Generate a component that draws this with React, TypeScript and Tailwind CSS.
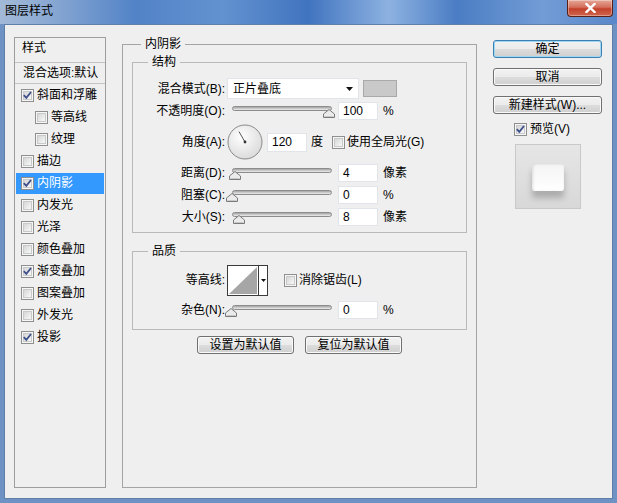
import React from "react";

function Check({ on }: { on?: boolean }) {
  return (
    <span className="flex h-[13px] w-[13px] shrink-0 items-center justify-center border border-[#8e8f8f] bg-[#f6f6f6]">
      <span className="flex h-[9px] w-[9px] items-center justify-center border border-[#c8c9ca] bg-[linear-gradient(135deg,#d6d6d6,#f8f8f8)]">
        {on && (
          <svg width="9" height="9" viewBox="0 0 9 9" className="overflow-visible">
            <path d="M0.8 4.2 L3.3 6.9 L8 1" fill="none" stroke="#3d4f8a" strokeWidth="1.8" />
          </svg>
        )}
      </span>
    </span>
  );
}

function Slider({ at }: { at: number }) {
  return (
    <div className="relative h-[12px] w-[100px] shrink-0">
      <div className="mt-[2px] h-[5px] rounded-[3px] border border-[#8c8c8c] bg-[linear-gradient(#a4a4a4,#ededed)]" />
      <svg width="12" height="9" viewBox="0 0 12 9" className="absolute top-[3px]" style={{ left: at }}>
        <path d="M0.5 8.5 V5 L6 0.5 L11.5 5 V8.5 Z" fill="#ebebeb" stroke="#7a7a7a" />
        <path d="M1.5 7.5 H10.5" stroke="#c8c8c8" />
      </svg>
    </div>
  );
}

function Field({ v }: { v: string }) {
  return (
    <div className="flex h-[18px] w-[40px] shrink-0 items-center border border-[#e1e4e8] bg-white pl-[4px]">{v}</div>
  );
}

function SliderRow({ label, at, v, unit }: { label: string; at: number; v: string; unit: string }) {
  return (
    <div className="flex h-[22px] items-center">
      <span className="w-[92px] shrink-0 text-right">{label}</span>
      <span className="ml-[7px]">
        <Slider at={at} />
      </span>
      <span className="ml-[6px]">
        <Field v={v} />
      </span>
      <span className="ml-[5px]">{unit}</span>
    </div>
  );
}

function Btn({ children, def }: { children: React.ReactNode; def?: boolean }) {
  return (
    <button
      className={
        def
          ? "flex h-[18px] w-full items-center justify-center rounded-[3px] border border-[#3c7fb1] bg-[linear-gradient(#f2f2f2_0%,#ebebeb_50%,#dddddd_50%,#cfcfcf_100%)] shadow-[inset_0_0_0_1px_#9fd7f5]"
          : "flex h-[18px] w-full items-center justify-center rounded-[3px] border border-[#707070] bg-[linear-gradient(#f2f2f2_0%,#ebebeb_50%,#dddddd_50%,#cfcfcf_100%)] shadow-[inset_0_0_0_1px_#fafafa]"
      }
    >
      {children}
    </button>
  );
}

const STYLES: { name: string; on?: boolean; sub?: boolean; sel?: boolean }[] = [
  { name: "斜面和浮雕", on: true },
  { name: "等高线", sub: true },
  { name: "纹理", sub: true },
  { name: "描边" },
  { name: "内阴影", on: true, sel: true },
  { name: "内发光" },
  { name: "光泽" },
  { name: "颜色叠加" },
  { name: "渐变叠加", on: true },
  { name: "图案叠加" },
  { name: "外发光" },
  { name: "投影", on: true },
];

export default function App() {
  return (
    <div className="h-[503px] w-[617px] overflow-hidden bg-[#6e92c4] font-['Liberation_Sans','Noto_Sans_CJK_SC',sans-serif] text-[12px] leading-[16px] text-black">
      {/* title bar */}
      <div className="flex h-[24px] items-start justify-between bg-[linear-gradient(90deg,#a3b9d8_0%,#86a6d2_9%,#5283c7_22%,#6392d0_36%,#4174bf_50%,#8db2e1_63%,#4b7dc4_74%,#729cd5_88%,#5a87ca_100%)]">
        <span className="ml-[5px] mt-[3px]">图层样式</span>
        <div className="mr-[4px] flex h-[17px] w-[46px] items-center justify-center rounded-b-[4px] border border-t-0 border-[#5a1f17] bg-[linear-gradient(#e6a898_0%,#d46f5c_45%,#c2412b_55%,#d0654c_100%)] shadow-[inset_0_0_0_1px_rgba(255,255,255,0.35)]">
          <svg width="11" height="10" viewBox="0 0 11 10">
            <path d="M1.5 1 L9.5 9 M9.5 1 L1.5 9" stroke="#ffffff" strokeWidth="2.4" strokeLinecap="square" />
          </svg>
        </div>
      </div>

      {/* client */}
      <div className="mx-[4px] flex h-[475px] items-start border border-[#5f7fa8] bg-[#efefef] pl-[9px]">
        {/* style list */}
        <div className="mt-[12px] h-[451px] w-[92px] shrink-0 border border-[#9d9d9d] bg-[#efefef]">
          <div className="h-[25px] border-b border-[#c4c4c4] pl-[7px] pt-[2px]">样式</div>
          <div className="flex h-[21px] items-center border-b border-[#c4c4c4] pl-[8px] whitespace-nowrap">
            混合选项:默认
          </div>
          {STYLES.map((s) => (
            <div key={s.name} className="flex h-[22px] items-center">
              <div
                className={
                  s.sel
                    ? "mx-[1px] flex h-[21px] flex-1 items-center gap-[3px] bg-[#3399ff] pl-[5px] text-white"
                    : s.sub
                    ? "mx-[1px] flex h-[21px] flex-1 items-center gap-[3px] pl-[19px]"
                    : "mx-[1px] flex h-[21px] flex-1 items-center gap-[3px] pl-[5px]"
                }
              >
                <Check on={s.on} />
                <span>{s.name}</span>
              </div>
            </div>
          ))}
        </div>

        {/* settings */}
        <fieldset className="ml-[16px] mt-[11px] h-[452px] w-[355px] shrink-0 border border-[#a4a4a4] px-[9px]">
          <legend className="ml-[9px] px-[4px]">内阴影</legend>

          <fieldset className="mt-[2px] border border-[#b9b9b9] pb-[4px]">
            <legend className="ml-[15px] px-[4px]">结构</legend>
            <div className="mt-[7px] flex h-[23px] items-center">
              <span className="w-[92px] shrink-0 text-right">混合模式(B):</span>
              <div className="ml-[2px] flex h-[21px] w-[132px] items-center justify-between border border-[#e1e4e8] bg-white pl-[5px] pr-[5px]">
                <span>正片叠底</span>
                <svg width="7" height="4" viewBox="0 0 7 4">
                  <path d="M0 0 H7 L3.5 4 Z" fill="#111" />
                </svg>
              </div>
              <div className="ml-[4px] h-[17px] w-[34px] border border-[#a9a9a9] bg-[#c9c9c9]" />
            </div>
            <SliderRow label="不透明度(O):" at={91} v="100" unit="%" />
            <div className="flex h-[40px] items-center">
              <span className="w-[92px] shrink-0 text-right">角度(A):</span>
              <svg width="36" height="36" viewBox="0 0 36 36" className="ml-[2px] shrink-0">
                <defs>
                  <radialGradient id="dial" cx="40%" cy="35%" r="70%">
                    <stop offset="0" stopColor="#ffffff" />
                    <stop offset="1" stopColor="#d9d9d9" />
                  </radialGradient>
                </defs>
                <circle cx="18" cy="18" r="17" fill="url(#dial)" stroke="#8a8a8a" />
                <line x1="18" y1="18" x2="12" y2="7.6" stroke="#555" />
                <circle cx="18" cy="18" r="1.4" fill="#333" />
              </svg>
              <div className="ml-[4px] flex h-[19px] w-[40px] shrink-0 items-center border border-[#e1e4e8] bg-white pl-[4px]">
                120
              </div>
              <span className="ml-[4px]">度</span>
              <span className="ml-[9px]">
                <Check />
              </span>
              <span className="ml-[2px]">使用全局光(G)</span>
            </div>
            <SliderRow label="距离(D):" at={-3} v="4" unit="像素" />
            <SliderRow label="阻塞(C):" at={-6} v="0" unit="%" />
            <SliderRow label="大小(S):" at={1} v="8" unit="像素" />
          </fieldset>

          <fieldset className="mt-[10px] border border-[#b9b9b9] pb-[8px]">
            <legend className="ml-[15px] px-[4px]">品质</legend>
            <div className="mt-[4px] flex h-[34px] items-center">
              <span className="w-[92px] shrink-0 text-right">等高线:</span>
              <div className="ml-[2px] flex h-[31px] w-[41px] shrink-0 border border-[#3a3a3a] bg-white">
                <svg width="30" height="29" viewBox="0 0 30 29">
                  <rect width="30" height="29" fill="#ffffff" />
                  <path d="M1 28 L29 1 V28 Z" fill="#a6a6a6" />
                </svg>
                <div className="flex flex-1 items-center justify-center border-l border-[#3a3a3a]">
                  <svg width="5" height="3" viewBox="0 0 5 3">
                    <path d="M0 0 H5 L2.5 3 Z" fill="#111" />
                  </svg>
                </div>
              </div>
              <span className="ml-[16px]">
                <Check />
              </span>
              <span className="ml-[2px]">消除锯齿(L)</span>
            </div>
            <div className="mt-[2px]">
              <SliderRow label="杂色(N):" at={-7} v="0" unit="%" />
            </div>
          </fieldset>

          <div className="mt-[6px] flex justify-center gap-[11px]">
            <div className="w-[97px]">
              <Btn>设置为默认值</Btn>
            </div>
            <div className="w-[97px]">
              <Btn>复位为默认值</Btn>
            </div>
          </div>
        </fieldset>

        {/* buttons */}
        <div className="ml-[16px] mt-[15px] flex w-[109px] shrink-0 flex-col">
          <Btn def>确定</Btn>
          <div className="mt-[10px]">
            <Btn>取消</Btn>
          </div>
          <div className="mt-[10px]">
            <Btn>新建样式(W)...</Btn>
          </div>
          <div className="mt-[8px] flex h-[14px] items-center gap-[3px] pl-[21px]">
            <Check on />
            <span>预览(V)</span>
          </div>
          <div className="mt-[8px] flex justify-center">
            <div className="flex h-[65px] w-[66px] items-start justify-center border border-[#c9c9c9] bg-[linear-gradient(#e6e6e6,#d8d8d8)] pt-[18px]">
              <div className="h-[28px] w-[32px] rounded-[3px] bg-[linear-gradient(#f4f4f4,#ffffff)] shadow-[0_7px_6px_rgba(0,0,0,0.22),inset_1px_1px_3px_rgba(0,0,0,0.12)]" />
            </div>
          </div>
        </div>
      </div>
    </div>
  );
}
